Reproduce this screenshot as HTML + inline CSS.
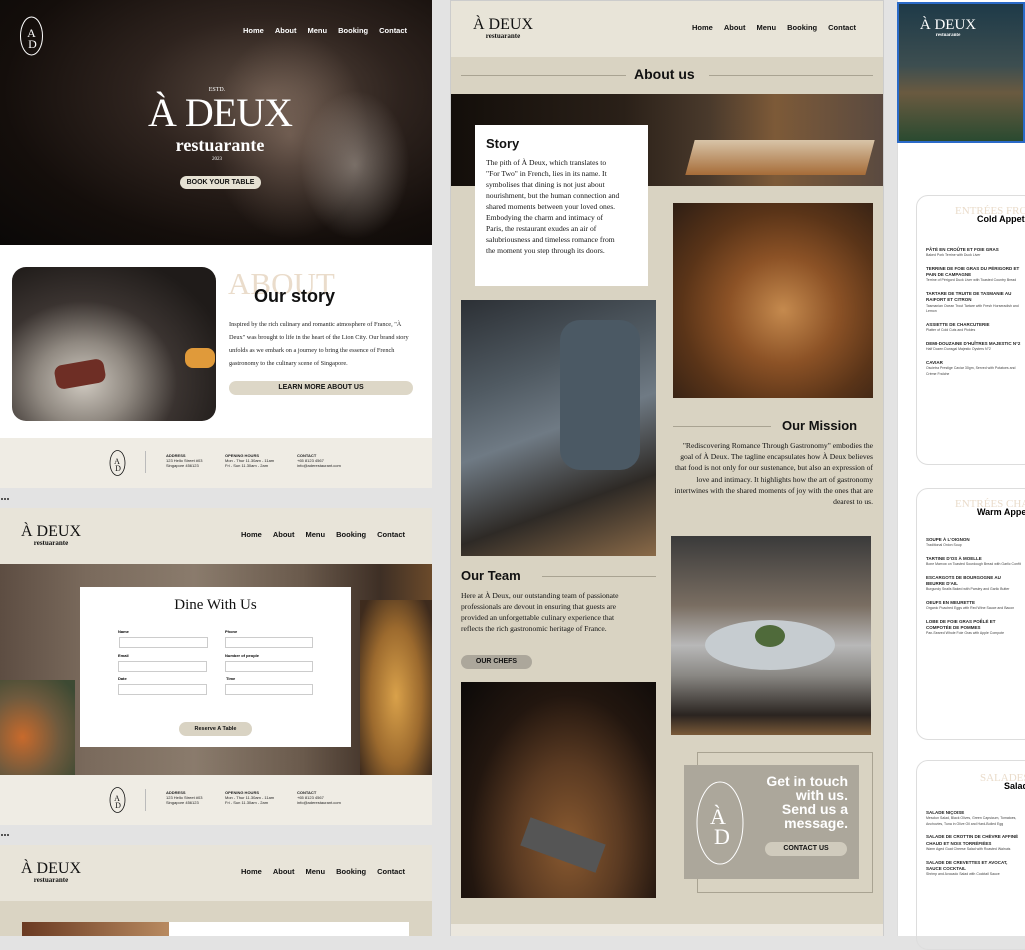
<!DOCTYPE html>
<html><head><meta charset="utf-8"><style>
*{margin:0;padding:0;box-sizing:border-box}
body{width:1025px;height:936px;background:#e3e3e3;position:relative;overflow:hidden;font-family:"Liberation Sans",sans-serif}
.a{position:absolute}
.nav{font-weight:bold;font-size:7.5px;color:#111;display:flex;gap:11px;white-space:nowrap}
.serif{font-family:"Liberation Serif",serif}
.logo{text-align:center;color:#111;font-family:"Liberation Serif",serif;line-height:1;white-space:nowrap}
.btn{border-radius:10px;font-weight:bold;text-align:center;color:#111;white-space:nowrap}
.ft{font-size:4px;font-weight:bold;color:#222;line-height:1.3;white-space:nowrap}
.menu-item{font-size:4.5px;font-weight:bold;color:#222;margin-top:7px;line-height:1.4}
.menu-sub{font-size:3.5px;color:#444;line-height:1.6}
.nw{white-space:nowrap}
</style></head><body>

<!-- LEFT PANEL 1 -->
<div class="a" style="left:0;top:0;width:432px;height:245px;background:radial-gradient(ellipse at 62% 38%,#5a4a40 0%,#2e231e 35%,#140e0b 70%,#0a0807 100%)"></div>
<div class="a" style="left:210px;top:30px;width:160px;height:210px;background:radial-gradient(ellipse at 50% 50%,rgba(200,170,150,.35),rgba(0,0,0,0) 70%)"></div>
<div class="a" style="left:300px;top:90px;width:110px;height:150px;background:radial-gradient(ellipse,rgba(210,200,190,.45),rgba(0,0,0,0) 70%)"></div>
<svg class="a" style="left:19px;top:15px" width="25" height="42"><ellipse cx="12.5" cy="21" rx="11" ry="19" fill="none" stroke="#fff" stroke-width="1"/><text x="12.5" y="22" font-family="Liberation Serif" font-size="12" fill="#fff" text-anchor="middle">A</text><text x="13.5" y="33" font-family="Liberation Serif" font-size="12" fill="#fff" text-anchor="middle">D</text></svg>
<div class="a nav" style="left:243px;top:26px;color:#fff">Home<span>About</span><span>Menu</span><span>Booking</span><span>Contact</span></div>
<div class="a serif nw" style="left:200px;top:87px;font-size:6px;color:#fff;width:34px;text-align:center">ESTD.</div>
<div class="a serif nw" style="left:120px;top:92px;font-size:40px;line-height:42px;color:#fff;width:200px;text-align:center;letter-spacing:-1px">À DEUX</div>
<div class="a serif nw" style="left:140px;top:135px;font-size:18px;line-height:20px;color:#fff;width:160px;text-align:center;font-weight:bold">restuarante</div>
<div class="a serif nw" style="left:200px;top:157px;font-size:5px;color:#fff;width:34px;text-align:center">2023</div>
<div class="a btn" style="left:180px;top:176px;width:81px;height:13px;background:#e6e1d3;font-size:7px;line-height:13px">BOOK YOUR TABLE</div>

<div class="a" style="left:0;top:245px;width:432px;height:193px;background:#fff"></div>
<div class="a" style="left:12px;top:267px;width:204px;height:154px;border-radius:14px;overflow:hidden;background:radial-gradient(ellipse at 35% 75%,#cfc9c0 0%,#8f8880 25%,#3a3330 50%,#1f1b19 80%)"></div>
<div class="a" style="left:55px;top:362px;width:50px;height:24px;background:#6e2e25;border-radius:8px;transform:rotate(-10deg)"></div>
<div class="a" style="left:185px;top:348px;width:30px;height:20px;background:#e09a3a;border-radius:8px"></div>
<div class="a serif nw" style="left:228px;top:267px;font-size:31px;line-height:34px;color:#eadccb">ABOUT</div>
<div class="a nw" style="left:254px;top:286px;font-size:18px;font-weight:bold;color:#111">Our story</div>
<div class="a serif" style="left:229px;top:318px;width:190px;font-size:6.3px;line-height:13px;color:#222">Inspired by the rich culinary and romantic atmosphere of France, "À Deux" was brought to life in the heart of the Lion City. Our brand story unfolds as we embark on a journey to bring the essence of French gastronomy to the culinary scene of Singapore.</div>
<div class="a btn" style="left:229px;top:381px;width:184px;height:14px;background:#ddd7c7;font-size:7px;line-height:14px">LEARN MORE ABOUT US</div>

<div class="a" style="left:0;top:438px;width:432px;height:50px;background:#efece4"></div>
<svg class="a" style="left:109px;top:449px" width="17" height="28"><ellipse cx="8.5" cy="14" rx="7.5" ry="12.5" fill="none" stroke="#111" stroke-width=".8"/><text x="8" y="15" font-family="Liberation Serif" font-size="8" fill="#111" text-anchor="middle">A</text><text x="9" y="22" font-family="Liberation Serif" font-size="8" fill="#111" text-anchor="middle">D</text></svg>
<div class="a" style="left:145px;top:451px;width:1px;height:22px;background:#bbb"></div>
<div class="a ft" style="left:166px;top:453px">ADDRESS<br><span style="font-weight:normal">123 Hello Street #03<br>Singapore 456123</span></div>
<div class="a ft" style="left:225px;top:453px">OPENING HOURS<br><span style="font-weight:normal">Mon - Thur 11.30am - 11am<br>Fri - Sun 11.30am - 2am</span></div>
<div class="a ft" style="left:297px;top:453px">CONTACT<br><span style="font-weight:normal">+65 8123 4567<br>info@aderestaurant.com</span></div>
<div class="a" style="left:1px;top:498px;width:2px;height:2px;background:#555;box-shadow:3px 0 #555,6px 0 #555"></div>

<!-- LEFT PANEL 2 -->
<div class="a" style="left:0;top:508px;width:432px;height:57px;background:#e8e4d9"></div>
<div class="a logo" style="left:18px;top:524px;width:66px"><div style="font-size:16px">À DEUX</div><div style="font-size:7px;font-weight:bold">restuarante</div></div>
<div class="a nav" style="left:241px;top:530px">Home<span>About</span><span>Menu</span><span>Booking</span><span>Contact</span></div>
<div class="a" style="left:0;top:564px;width:432px;height:211px;background:linear-gradient(90deg,#5d4d42 0%,#7a6a5c 20%,#8a7b6c 45%,#6a5a4c 70%,#3e2f25 88%,#6b4a2a 100%)"></div>
<div class="a" style="left:0;top:680px;width:75px;height:95px;background:radial-gradient(ellipse at 30% 60%,#c86a2c,#6e5a3e 50%,#3d4a33 90%)"></div>
<div class="a" style="left:360px;top:600px;width:72px;height:175px;background:radial-gradient(ellipse at 50% 55%,#d9a14a,#9c6a2e 50%,#3e2b1d 90%)"></div>
<div class="a" style="left:80px;top:587px;width:271px;height:160px;background:#fff"></div>
<div class="a serif nw" style="left:80px;top:597px;width:271px;text-align:center;font-size:15px;color:#111">Dine With Us</div>
<div class="a" style="left:118px;top:629px;font-size:4px;font-weight:bold">Name</div>
<div class="a" style="left:225px;top:629px;font-size:4px;font-weight:bold">Phone</div>
<div class="a" style="left:119px;top:637px;width:89px;height:11px;border:1px solid #ccc"></div>
<div class="a" style="left:225px;top:637px;width:88px;height:11px;border:1px solid #ccc"></div>
<div class="a" style="left:118px;top:653px;font-size:4px;font-weight:bold">Email</div>
<div class="a nw" style="left:225px;top:653px;font-size:4px;font-weight:bold">Number of people</div>
<div class="a" style="left:118px;top:661px;width:89px;height:11px;border:1px solid #ccc"></div>
<div class="a" style="left:225px;top:661px;width:88px;height:11px;border:1px solid #ccc"></div>
<div class="a" style="left:118px;top:676px;font-size:4px;font-weight:bold">Date</div>
<div class="a" style="left:226px;top:676px;font-size:4px;font-weight:bold">Time</div>
<div class="a" style="left:118px;top:684px;width:89px;height:11px;border:1px solid #ccc"></div>
<div class="a" style="left:225px;top:684px;width:88px;height:11px;border:1px solid #ccc"></div>
<div class="a btn" style="left:179px;top:722px;width:73px;height:14px;background:#d9d3c3;font-size:5.5px;line-height:14px">Reserve A Table</div>
<div class="a" style="left:0;top:775px;width:432px;height:50px;background:#efece4"></div>
<svg class="a" style="left:109px;top:786px" width="17" height="28"><ellipse cx="8.5" cy="14" rx="7.5" ry="12.5" fill="none" stroke="#111" stroke-width=".8"/><text x="8" y="15" font-family="Liberation Serif" font-size="8" fill="#111" text-anchor="middle">A</text><text x="9" y="22" font-family="Liberation Serif" font-size="8" fill="#111" text-anchor="middle">D</text></svg>
<div class="a" style="left:145px;top:789px;width:1px;height:22px;background:#bbb"></div>
<div class="a ft" style="left:166px;top:790px">ADDRESS<br><span style="font-weight:normal">123 Hello Street #03<br>Singapore 456123</span></div>
<div class="a ft" style="left:225px;top:790px">OPENING HOURS<br><span style="font-weight:normal">Mon - Thur 11.30am - 11am<br>Fri - Sun 11.30am - 2am</span></div>
<div class="a ft" style="left:297px;top:790px">CONTACT<br><span style="font-weight:normal">+65 8123 4567<br>info@aderestaurant.com</span></div>
<div class="a" style="left:1px;top:834px;width:2px;height:2px;background:#555;box-shadow:3px 0 #555,6px 0 #555"></div>

<!-- LEFT PANEL 3 -->
<div class="a" style="left:0;top:845px;width:432px;height:57px;background:#e8e4d9"></div>
<div class="a logo" style="left:18px;top:861px;width:66px"><div style="font-size:16px">À DEUX</div><div style="font-size:7px;font-weight:bold">restuarante</div></div>
<div class="a nav" style="left:241px;top:867px">Home<span>About</span><span>Menu</span><span>Booking</span><span>Contact</span></div>
<div class="a" style="left:0;top:901px;width:432px;height:35px;background:#dad4c3"></div>
<div class="a" style="left:22px;top:922px;width:147px;height:14px;background:linear-gradient(90deg,#6a3a22,#b88a60)"></div>
<div class="a" style="left:169px;top:922px;width:240px;height:14px;background:#fff"></div>

<!-- MIDDLE PANEL -->
<div class="a" style="left:450px;top:0;width:434px;height:936px;background:#d9d3c2;border:1px solid #ccc"></div>
<div class="a" style="left:451px;top:1px;width:432px;height:56px;background:#e8e4d8"></div>
<div class="a logo" style="left:470px;top:17px;width:66px"><div style="font-size:16px">À DEUX</div><div style="font-size:7px;font-weight:bold">restuarante</div></div>
<div class="a nav" style="left:692px;top:23px">Home<span>About</span><span>Menu</span><span>Booking</span><span>Contact</span></div>
<div class="a" style="left:461px;top:75px;width:165px;height:1px;background:#a9a392"></div>
<div class="a" style="left:709px;top:75px;width:164px;height:1px;background:#a9a392"></div>
<div class="a nw" style="left:634px;top:66px;font-size:14px;font-weight:bold;color:#111">About us</div>
<div class="a" style="left:451px;top:94px;width:432px;height:92px;background:linear-gradient(90deg,#130e0a 0%,#2a2018 40%,#4a3a2c 60%,#7d5a38 75%,#5a4a40 100%)"></div>
<div class="a" style="left:690px;top:140px;width:180px;height:35px;background:linear-gradient(180deg,#d8c4a8,#a66c38);transform:skewX(-15deg)"></div>
<div class="a" style="left:475px;top:125px;width:173px;height:161px;background:#fff"></div>
<div class="a nw" style="left:486px;top:136px;font-size:13px;font-weight:bold;color:#111">Story</div>
<div class="a serif" style="left:486px;top:157px;width:135px;font-size:7.6px;line-height:11px;color:#111">The pith of À Deux, which translates to "For Two" in French, lies in its name. It symbolises that dining is not just about nourishment, but the human connection and shared moments between your loved ones. Embodying the charm and intimacy of Paris, the restaurant exudes an air of salubriousness and timeless romance from the moment you step through its doors.</div>
<div class="a" style="left:461px;top:300px;width:195px;height:256px;background:linear-gradient(160deg,#2c3035 0%,#505a62 30%,#6f7a84 50%,#2e2a26 75%,#8a6a48 100%)"></div>
<div class="a" style="left:560px;top:320px;width:80px;height:150px;background:#4b5964;border-radius:20px"></div>
<div class="a" style="left:673px;top:203px;width:200px;height:195px;background:radial-gradient(ellipse at 55% 55%,#c58a4e 0%,#8c5226 35%,#5a3418 65%,#2e1e14 100%)"></div>
<div class="a" style="left:673px;top:426px;width:98px;height:1px;background:#a9a392"></div>
<div class="a nw" style="left:782px;top:418px;font-size:13px;font-weight:bold;color:#111">Our Mission</div>
<div class="a serif" style="left:670px;top:440px;width:203px;font-size:7.6px;line-height:11.2px;color:#111;text-align:right">"Rediscovering Romance Through Gastronomy" embodies the goal of À Deux. The tagline encapsulates how À Deux believes that food is not only for our sustenance, but also an expression of love and intimacy. It highlights how the art of gastronomy intertwines with the shared moments of joy with the ones that are dearest to us.</div>
<div class="a nw" style="left:461px;top:568px;font-size:13px;font-weight:bold;color:#111">Our Team</div>
<div class="a" style="left:542px;top:576px;width:114px;height:1px;background:#a9a392"></div>
<div class="a serif" style="left:461px;top:590px;width:170px;font-size:7.6px;line-height:11px;color:#111">Here at À Deux, our outstanding team of passionate professionals are devout in ensuring that guests are provided an unforgettable culinary experience that reflects the rich gastronomic heritage of France.</div>
<div class="a btn" style="left:461px;top:655px;width:71px;height:14px;background:#aca79b;font-size:7px;line-height:14px">OUR CHEFS</div>
<div class="a" style="left:461px;top:682px;width:195px;height:216px;background:radial-gradient(ellipse at 55% 75%,#8a5a30 0%,#5a3a22 35%,#22160f 65%,#0b0908 100%)"></div>
<div class="a" style="left:523px;top:830px;width:80px;height:30px;background:#555;transform:rotate(20deg)"></div>
<div class="a" style="left:671px;top:536px;width:200px;height:199px;background:linear-gradient(180deg,#3a3a3a 0%,#7a6e62 35%,#b8b8b8 55%,#8a8884 70%,#2a2420 90%,#7a5a38 100%)"></div>
<div class="a" style="left:705px;top:620px;width:130px;height:50px;border-radius:50%;background:#c6ccd0"></div>
<div class="a" style="left:755px;top:625px;width:30px;height:22px;border-radius:50%;background:#4f6a3a"></div>
<div class="a" style="left:697px;top:752px;width:176px;height:141px;border:1px solid #a9a392"></div>
<div class="a" style="left:684px;top:765px;width:175px;height:114px;background:#aca79b"></div>
<svg class="a" style="left:695px;top:780px" width="50" height="86"><ellipse cx="25" cy="43" rx="23" ry="41" fill="none" stroke="#fff" stroke-width="1"/><text x="23" y="44" font-family="Liberation Serif" font-size="22" fill="#fff" text-anchor="middle">À</text><text x="27" y="64" font-family="Liberation Serif" font-size="22" fill="#fff" text-anchor="middle">D</text></svg>
<div class="a nw" style="left:730px;top:774px;width:118px;text-align:right;color:#fff;font-weight:bold;font-size:14px;line-height:14px">Get in touch<br>with us.<br>Send us a<br>message.</div>
<div class="a btn" style="left:765px;top:842px;width:82px;height:14px;background:#d0cbbd;font-size:7px;line-height:14px">CONTACT US</div>
<div class="a" style="left:451px;top:924px;width:432px;height:12px;background:#ebe7de"></div>

<!-- RIGHT PANEL -->
<div class="a" style="left:897px;top:0;width:128px;height:936px;background:#fff;border-left:1px solid #ddd"></div>
<div class="a" style="left:897px;top:2px;width:128px;height:141px;background:linear-gradient(180deg,#1e3a48 0%,#3d4e50 45%,#6a5a40 65%,#2a4a30 100%);border:2px solid #2a6ac8"></div>
<div class="a logo" style="left:913px;top:18px;width:70px;color:#fff"><div style="font-size:15px">À DEUX</div><div style="font-size:5px;font-weight:bold">restuarante</div></div>

<div class="a" style="left:916px;top:195px;width:120px;height:270px;border:1px solid #ddd;border-radius:12px"></div>
<div class="a serif nw" style="left:955px;top:205px;font-size:11px;color:#eadccb">ENTRÉES FROIDES</div>
<div class="a nw" style="left:977px;top:214px;font-size:9px;font-weight:bold">Cold Appetizers</div>
<div class="a" style="left:926px;top:240px;width:95px">
<div class="menu-item">PÂTÉ EN CROÛTE ET FOIE GRAS</div><div class="menu-sub">Baked Pork Terrine with Duck Liver</div>
<div class="menu-item">TERRINE DE FOIE GRAS DU PÉRIGORD ET PAIN DE CAMPAGNE</div><div class="menu-sub">Terrine of Périgord Duck Liver with Toasted Country Bread</div>
<div class="menu-item">TARTARE DE TRUITE DE TASMANIE AU RAIFORT ET CITRON</div><div class="menu-sub">Tasmanian Ocean Trout Tartare with Fresh Horseradish and Lemon</div>
<div class="menu-item">ASSIETTE DE CHARCUTERIE</div><div class="menu-sub">Platter of Cold Cuts and Pickles</div>
<div class="menu-item">DEMI-DOUZAINE D'HUÎTRES MAJESTIC N°2</div><div class="menu-sub">Half Dozen Dunsgal Majestic Oysters N°2</div>
<div class="menu-item">CAVIAR</div><div class="menu-sub">Oscietra Prestige Caviar 30gm, Served with Potatoes and Crème Fraîche</div>
</div>

<div class="a" style="left:916px;top:488px;width:120px;height:252px;border:1px solid #ddd;border-radius:12px"></div>
<div class="a serif nw" style="left:955px;top:498px;font-size:11px;color:#eadccb">ENTRÉES CHAUDES</div>
<div class="a nw" style="left:977px;top:507px;font-size:9px;font-weight:bold">Warm Appetizers</div>
<div class="a" style="left:926px;top:530px;width:95px">
<div class="menu-item">SOUPE À L'OIGNON</div><div class="menu-sub">Traditional Onion Soup</div>
<div class="menu-item">TARTINE D'OS À MOELLE</div><div class="menu-sub">Bone Marrow on Toasted Sourdough Bread with Garlic Confit</div>
<div class="menu-item">ESCARGOTS DE BOURGOGNE AU BEURRE D'AIL</div><div class="menu-sub">Burgundy Snails Baked with Parsley and Garlic Butter</div>
<div class="menu-item">OEUFS EN MEURETTE</div><div class="menu-sub">Organic Poached Eggs with Red Wine Sauce and Bacon</div>
<div class="menu-item">LOBE DE FOIE GRAS POÊLÉ ET COMPOTÉE DE POMMES</div><div class="menu-sub">Pan-Seared Whole Foie Gras with Apple Compote</div>
</div>

<div class="a" style="left:916px;top:760px;width:120px;height:190px;border:1px solid #ddd;border-radius:12px"></div>
<div class="a serif nw" style="left:980px;top:772px;font-size:11px;color:#eadccb">SALADES</div>
<div class="a nw" style="left:1004px;top:781px;font-size:9px;font-weight:bold">Salads</div>
<div class="a" style="left:926px;top:803px;width:95px">
<div class="menu-item">SALADE NIÇOISE</div><div class="menu-sub">Mesclun Salad, Black Olives, Green Capsicum, Tomatoes, Anchovies, Tuna in Olive Oil and Hard-Boiled Egg</div>
<div class="menu-item">SALADE DE CROTTIN DE CHÈVRE AFFINÉ CHAUD ET NOIX TORRÉFIÉES</div><div class="menu-sub">Warm Aged Goat Cheese Salad with Roasted Walnuts</div>
<div class="menu-item">SALADE DE CREVETTES ET AVOCAT, SAUCE COCKTAIL</div><div class="menu-sub">Shrimp and Avocado Salad with Cocktail Sauce</div>
</div>
</body></html>
